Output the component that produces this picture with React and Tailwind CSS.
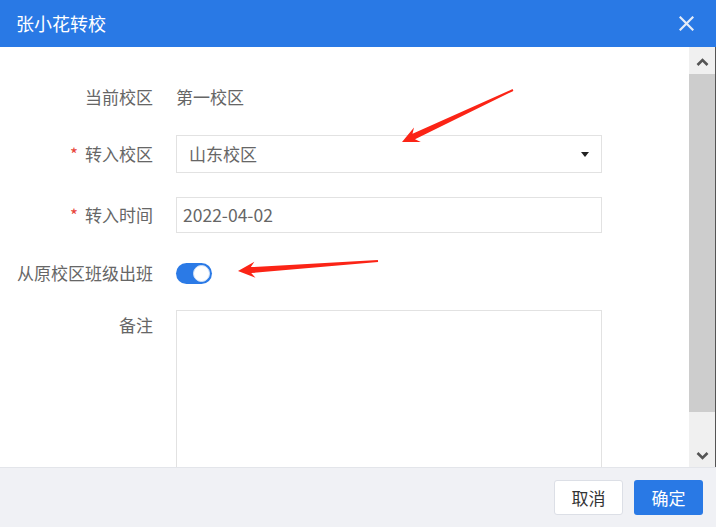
import React from "react";

const FONT = { fontFamily: '"Noto Sans CJK SC", "Noto Sans", sans-serif' };

// Tapered annotation arrow: thin tail widening toward a triangular head at the tip.
function arrowPoints(tip, tail) {
  const dx = tail[0] - tip[0];
  const dy = tail[1] - tip[1];
  const len = Math.hypot(dx, dy);
  const d = [dx / len, dy / len];
  const n = [-d[1], d[0]];
  const at = (base, along, side) => [
    base[0] + d[0] * along + n[0] * side,
    base[1] + d[1] * along + n[1] * side,
  ];
  const pts = [
    tip,
    at(tip, 17, 8),
    at(tip, 13, 3),
    at(tail, 0, 1),
    at(tail, 0, -1),
    at(tip, 13, -3),
    at(tip, 17, -8),
  ];
  return pts.map((p) => p.map((v) => v.toFixed(1)).join(",")).join(" ");
}

function Label({ required, children, className = "" }) {
  return (
    <div className={`w-[153px] shrink-0 text-right text-[17px] text-[#666] ${className}`}>
      {required && <span className="mr-[7px] text-[#e8443a]">*</span>}
      {children}
    </div>
  );
}

export default function App() {
  return (
    <div className="relative flex h-[527px] w-[716px] flex-col overflow-hidden bg-white" style={FONT}>
      {/* title bar */}
      <div className="flex h-[47px] shrink-0 items-center justify-between bg-[#2979e5] pl-[16px] pr-[22px]">
        <span className="text-[18px] text-white">张小花转校</span>
        <svg width="15" height="15" viewBox="0 0 15 15" className="mt-[-1px]">
          <path d="M1.5 1.5 L13.5 13.5 M13.5 1.5 L1.5 13.5" stroke="#e4ecf8" strokeWidth="2.2" strokeLinecap="square" />
        </svg>
      </div>

      {/* body */}
      <div className="flex min-h-0 flex-1">
        <div className="flex-1 overflow-hidden pt-[37px]">
          <div className="flex h-[26px] items-center">
            <Label className="leading-[26px]">当前校区</Label>
            <div className="ml-[23px] text-[17px] leading-[26px] text-[#666]">第一校区</div>
          </div>

          <div className="mt-[25px] flex items-center">
            <Label required className="leading-[38px]">转入校区</Label>
            <div className="ml-[23px] flex h-[38px] w-[426px] items-center justify-between border border-[#e2e2e2] pl-[12px] pr-[12px]">
              <span className="text-[17px] text-[#666]">山东校区</span>
              <svg width="8" height="5" viewBox="0 0 8 5">
                <path d="M0 0 H8 L4 5 Z" fill="#222" />
              </svg>
            </div>
          </div>

          <div className="mt-[24px] flex items-center">
            <Label required className="leading-[36px]">转入时间</Label>
            <div className="ml-[23px] flex h-[36px] w-[426px] items-center border border-[#e2e2e2] pl-[6px]">
              <span className="text-[17.5px] text-[#666]">2022-04-02</span>
            </div>
          </div>

          <div className="mt-[28px] flex h-[24px] items-center">
            <Label className="leading-[24px]">从原校区班级出班</Label>
            <div className="ml-[23px] flex h-[21px] w-[36px] items-center justify-end rounded-full bg-[#2b7ae6] pr-[2px]">
              <div className="h-[17px] w-[17px] rounded-full border border-[#cfe0f8] bg-white" />
            </div>
          </div>

          <div className="mt-[25px] flex items-start">
            <Label className="leading-[30px]">备注</Label>
            <div className="ml-[23px] h-[180px] w-[426px] shrink-0 border border-[#e2e2e2]" />
          </div>
        </div>

        {/* scrollbar */}
        <div className="flex w-[26px] shrink-0 flex-col bg-[#f0f0f0]">
          <div className="flex h-[27px] items-center justify-center pt-[2px]">
            <svg width="13" height="8" viewBox="0 0 13 8">
              <path d="M1.5 7 L6.5 2 L11.5 7" stroke="#555" strokeWidth="2.6" fill="none" />
            </svg>
          </div>
          <div className="h-[338px] bg-[#cdcdcd]" />
          <div className="flex flex-1 items-end justify-center pb-[7px]">
            <svg width="13" height="8" viewBox="0 0 13 8">
              <path d="M1.5 1 L6.5 6 L11.5 1" stroke="#555" strokeWidth="2.6" fill="none" />
            </svg>
          </div>
        </div>
        <div className="w-[1px] shrink-0 bg-[#555]" />
      </div>

      {/* footer */}
      <div className="flex h-[60px] shrink-0 items-center justify-end gap-[11px] border-t border-[#e3e5ea] bg-[#f0f1f5] pr-[13px]">
        <button className="h-[35px] w-[69px] rounded-[3px] border border-[#dcdfe6] bg-white text-[17px] text-[#333]">
          取消
        </button>
        <button className="h-[35px] w-[69px] rounded-[3px] bg-[#2979e5] text-[17px] text-white">确定</button>
      </div>

      {/* annotation arrows */}
      <svg className="pointer-events-none absolute left-0 top-0" width="716" height="527">
        <polygon points={arrowPoints([402, 142], [513, 90])} fill="#fb2416" />
        <polygon points={arrowPoints([238, 271], [378, 261])} fill="#fb2416" />
      </svg>
    </div>
  );
}
